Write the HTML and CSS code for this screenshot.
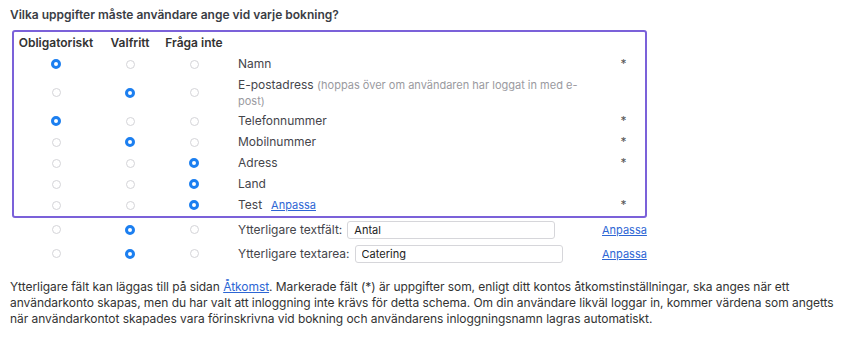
FILE: index.html
```html
<!DOCTYPE html>
<html lang="sv">
<head>
    <meta charset="UTF-8">
    <meta name="viewport" content="width=device-width, initial-scale=1.0">
    <title>Bokningsuppgifter</title>
    <link rel="stylesheet" href="styles.css">
</head>
<body>
    <h3 class="question">Vilka uppgifter måste användare ange vid varje bokning?</h3>

    <div class="fields">
        <div class="highlight">
            <div class="row head">
                <div class="cell">Obligatoriskt</div>
                <div class="cell">Valfritt</div>
                <div class="cell">Fråga inte</div>
                <div class="label"></div>
                <div class="extra"></div>
            </div>
            <div class="row">
                <div class="cell"><input type="radio" name="f1" checked></div>
                <div class="cell"><input type="radio" name="f1"></div>
                <div class="cell"><input type="radio" name="f1"></div>
                <div class="label">Namn</div>
                <div class="extra">*</div>
            </div>
            <div class="row">
                <div class="cell"><input type="radio" name="f2"></div>
                <div class="cell"><input type="radio" name="f2" checked></div>
                <div class="cell"><input type="radio" name="f2"></div>
                <div class="label block">E-postadress <span class="hint">(hoppas över om användaren har loggat in med e-post)</span></div>
                <div class="extra"></div>
            </div>
            <div class="row">
                <div class="cell"><input type="radio" name="f3" checked></div>
                <div class="cell"><input type="radio" name="f3"></div>
                <div class="cell"><input type="radio" name="f3"></div>
                <div class="label">Telefonnummer</div>
                <div class="extra">*</div>
            </div>
            <div class="row">
                <div class="cell"><input type="radio" name="f4"></div>
                <div class="cell"><input type="radio" name="f4" checked></div>
                <div class="cell"><input type="radio" name="f4"></div>
                <div class="label">Mobilnummer</div>
                <div class="extra">*</div>
            </div>
            <div class="row">
                <div class="cell"><input type="radio" name="f5"></div>
                <div class="cell"><input type="radio" name="f5"></div>
                <div class="cell"><input type="radio" name="f5" checked></div>
                <div class="label">Adress</div>
                <div class="extra">*</div>
            </div>
            <div class="row">
                <div class="cell"><input type="radio" name="f6"></div>
                <div class="cell"><input type="radio" name="f6"></div>
                <div class="cell"><input type="radio" name="f6" checked></div>
                <div class="label">Land</div>
                <div class="extra"></div>
            </div>
            <div class="row">
                <div class="cell"><input type="radio" name="f7"></div>
                <div class="cell"><input type="radio" name="f7"></div>
                <div class="cell"><input type="radio" name="f7" checked></div>
                <div class="label">Test <a href="#" class="link small">Anpassa</a></div>
                <div class="extra">*</div>
            </div>
        </div>

        <div class="row outer">
            <div class="cell"><input type="radio" name="f8"></div>
            <div class="cell"><input type="radio" name="f8" checked></div>
            <div class="cell"><input type="radio" name="f8"></div>
            <div class="label">Ytterligare textfält: <input type="text" class="text-input" value="Antal"></div>
            <div class="extra"><a href="#" class="link small">Anpassa</a></div>
        </div>
        <div class="row outer">
            <div class="cell"><input type="radio" name="f9"></div>
            <div class="cell"><input type="radio" name="f9" checked></div>
            <div class="cell"><input type="radio" name="f9"></div>
            <div class="label">Ytterligare textarea: <input type="text" class="text-input" value="Catering"></div>
            <div class="extra"><a href="#" class="link small">Anpassa</a></div>
        </div>
    </div>

    <p class="note">Ytterligare fält kan läggas till på sidan <a href="#" class="link">Åtkomst</a>. Markerade fält (*) är uppgifter som, enligt ditt kontos åtkomstinställningar, ska anges när ett användarkonto skapas, men du har valt att inloggning inte krävs för detta schema. Om din användare likväl loggar in, kommer värdena som angetts när användarkontot skapades vara förinskrivna vid bokning och användarens inloggningsnamn lagras automatiskt.</p>
</body>
</html>
```

FILE: styles.css
```css
* {
    margin: 0;
    padding: 0;
    box-sizing: border-box;
}

body {
    font-family: Inter, 'Liberation Sans', sans-serif;
    font-size: 12px;
    line-height: 16px;
    color: #3d3d42;
    background: #fff;
    padding: 7px 6px 7px 10px;
}

.question {
    font-size: 12px;
    font-weight: 600;
    color: #3a3d45;
    margin-bottom: 7px;
}

.fields {
    width: 635px;
    margin-left: 2px;
}

.highlight {
    border: 2px solid #7b61d9;
    border-radius: 3px;
}

.row {
    display: grid;
    grid-template-columns: 84px 64px 64px 1fr 43px;
    align-items: center;
    padding: 2px 0;
    min-height: 21px;
}

.row.head {
    font-weight: 600;
    color: #333;
    min-height: 21.5px;
}

.row.outer {
    padding: 3px 2px;
    min-height: 24px;
}

.row.outer:first-of-type {
    min-height: 22px;
}

.cell {
    white-space: nowrap;
    display: flex;
    justify-content: center;
    align-items: center;
}

.label {
    padding-left: 12px;
    padding-right: 20px;
    color: #45454b;
    display: flex;
    align-items: center;
    flex-wrap: wrap;
}

.label.block {
    display: block;
}

.hint {
    color: #9a9aa0;
    font-size: 11px;
}

.extra {
    text-align: center;
    color: #555;
}

input[type="radio"] {
    appearance: none;
    -webkit-appearance: none;
    width: 9px;
    height: 9px;
    border: 1px solid #d4d4d8;
    border-radius: 50%;
    background: #fff;
    margin: 0;
}

input[type="radio"]:checked {
    width: 10px;
    height: 10px;
    border: 3px solid #1c7ff0;
    background: #fff;
}

.text-input {
    margin-left: 5px;
    width: 208px;
    height: 18px;
    border: 1px solid #d6d6da;
    border-radius: 3px;
    padding: 0 6px;
    font-family: Inter, 'Liberation Sans', sans-serif;
    font-size: 11px;
    color: #222;
    background: #fff;
}

.link {
    color: #2d66d4;
    text-decoration: underline;
}

.link.small {
    font-size: 11px;
    margin-left: 9px;
}

.extra .link.small {
    margin-left: 0;
}

.note {
    margin-top: 13px;
    color: #333;
    letter-spacing: -0.05px;
}
```
